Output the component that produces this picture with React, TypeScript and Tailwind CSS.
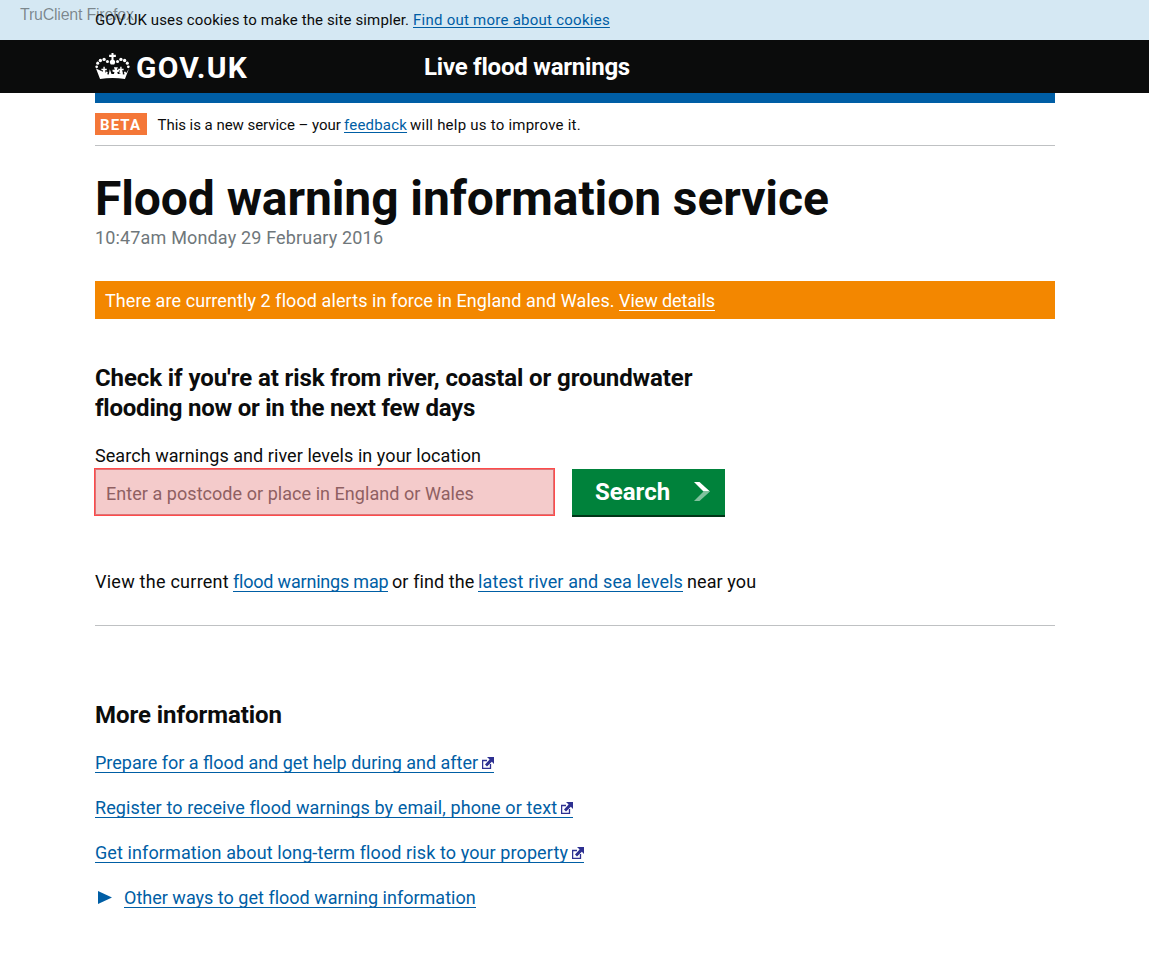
import type { ReactNode } from "react";

function Crown() {
  const dots = [
    [5, 41, 4],
    [8, 30, 4.5],
    [16, 22, 5],
    [27, 19, 5],
    [37, 25, 4.5],
  ];
  return (
    <svg className="h-[27px] w-[35px]" viewBox="0 0 104 80" fill="#fff" aria-hidden="true">
      {dots.map(([x, y, r]) => (
        <g key={x}>
          <circle cx={x} cy={y} r={r} />
          <circle cx={104 - x} cy={y} r={r} />
        </g>
      ))}
      <path d="M49 0h6v5h7v7h-7v8c6 2 7 9 2 14h-10c-5-5-4-12 2-14v-8h-7v-7h7z" />
      <path d="M3 46l12 31q37-6 74 0l12-31-8 13-4-5-3 4 2 5-5 1-3-16-5 14h-7l-2-5 6-2v-5h-7l3-8h-12l3 8h-7v5l6 2-2 5h-7l-5-14-3 16-5-1 2-5-3-4-4 5z" />
      <path d="M19 47h6v-6h4v6h6v4h-5l2 10h-10l2-10h-5zM69 47h6v-6h4v6h6v4h-5l2 10h-10l2-10h-5z" />
    </svg>
  );
}

function ExternalIcon() {
  return (
    <svg className="mt-[3px] ml-[4px] h-[12px] w-[12px] shrink-0" viewBox="0 0 12 12" aria-hidden="true">
      <path d="M5 3.5H.6v7.9h7.9V7" fill="none" stroke="#2e3191" strokeWidth="1.3" />
      <path d="M5 0h7v7L9.8 4.8 5 9.4 3 7.4l4.6-4.8z" fill="#2e3191" />
    </svg>
  );
}

function SmallLink({ className, children }: { className: string; children: ReactNode }) {
  return (
    <a
      href="#"
      className={`text-[#005ea5] underline decoration-1 underline-offset-[2px] [text-decoration-skip-ink:none] ${className}`}
    >
      {children}
    </a>
  );
}

function BodyLink({ className, children }: { className: string; children: ReactNode }) {
  return (
    <a
      href="#"
      className={`flex h-[19px] items-start border-b border-[#005ea5] leading-[18px] whitespace-nowrap text-[#005ea5] ${className}`}
    >
      {children}
    </a>
  );
}

export default function App() {
  return (
    <div className="h-[958px] w-[1166px] overflow-hidden bg-white font-['Roboto',sans-serif] text-[#0b0c0c]">
      <div className="w-[1149px]">
        <div className="relative flex h-10 bg-[#d5e8f3] pl-[95px] text-[15px] leading-10 whitespace-nowrap">
          <span className="w-[318px] tracking-[0.11px]">GOV.UK uses cookies to make the site simpler.</span>
          <SmallLink className="tracking-[0.25px]">Find out more about cookies</SmallLink>
          <span className="absolute top-[5px] left-[20px] font-['Liberation_Sans',sans-serif] text-[16px] leading-[20px] tracking-[-0.23px] text-[#0b0c0c]/45">
            TruClient Firefox
          </span>
        </div>

        <header className="flex h-[53px] bg-[#0b0c0c] pl-[95px] font-bold text-white">
          <a href="#" className="flex w-[329px] items-start">
            <span className="pt-[13px]">
              <Crown />
            </span>
            <span className="ml-[6px] pt-px text-[30px] leading-[53px] tracking-[1.2px]">GOV.UK</span>
          </a>
          <a href="#" className="pt-px text-[24px] leading-[53px] tracking-[-0.23px]">
            Live flood warnings
          </a>
        </header>
      </div>

      <main className="ml-[95px] w-[960px]">
        <div className="h-[10px] bg-[#005ea5]" />

        <div className="flex h-[43px] items-start border-b border-[#bfc1c3] pt-[10px] text-[15px] leading-[24px] whitespace-nowrap">
          <strong className="mr-[10.5px] h-[22px] w-[52px] bg-[#f47738] pl-[5px] text-[15px] leading-[24px] tracking-[1.1px] text-white">
            BETA
          </strong>
          <span className="w-[186.5px] tracking-[-0.04px]">This is a new service – your</span>
          <SmallLink className="mr-[3px] tracking-[0.2px]">feedback</SmallLink>
          <span className="tracking-[0.23px]">will help us to improve it.</span>
        </div>

        <h1 className="pt-[28px] text-[48px] leading-[50px] font-bold tracking-[-0.09px] whitespace-nowrap">
          Flood warning information service
        </h1>
        <p className="pt-[4px] text-[18px] leading-[20px] tracking-[0.16px] text-[#6f777b]">
          10:47am Monday 29 February 2016
        </p>

        <div className="mt-[33px] flex h-[38px] bg-[#f38700] pl-[10px] text-[18px] leading-[40px] whitespace-nowrap text-white">
          <span className="w-[514px] tracking-[0.08px]">
            There are currently 2 flood alerts in force in England and Wales.
          </span>
          <a href="#" className="tracking-[-0.07px] underline decoration-1 underline-offset-[3px] [text-decoration-skip-ink:none]">
            View details
          </a>
        </div>

        <h2 className="mt-[44px] text-[24px] leading-[30px] font-bold whitespace-nowrap">
          <span className="block tracking-[-0.1px]">Check if you're at risk from river, coastal or groundwater</span>
          <span className="block tracking-[-0.23px]">flooding now or in the next few days</span>
        </h2>

        <form>
          <label htmlFor="place" className="mt-[23px] block text-[18px] leading-[20px] tracking-[0.06px]">
            Search warnings and river levels in your location
          </label>
          <div className="mt-[2px] flex items-start">
            <div className="-ml-px h-[48px] w-[461px] border border-[#ff4a4a]">
              <input
                id="place"
                type="text"
                placeholder="Enter a postcode or place in England or Wales"
                className="block h-[46px] w-[459px] border border-[#dc7577] bg-[#f4cbcb] pt-[3px] pl-[10px] text-[18px] tracking-[0.05px] outline-none placeholder:text-[#8f6062]"
              />
            </div>
            <button
              type="button"
              className="mt-px ml-[17px] flex h-[48px] w-[153px] border-b-2 border-[#003618] bg-[#00823b] pl-[23px] text-[24px] leading-[46px] font-bold text-white"
            >
              <span>Search</span>
              <svg className="mt-[13px] ml-[24px] h-[19px] w-[16px]" viewBox="0 0 16 19" aria-hidden="true">
                <path d="M0 0h5.5L16 9.5H9.5z" fill="#fff" />
                <path d="M9.5 9.5H16L5.5 19H0z" fill="#80c19d" />
              </svg>
            </button>
          </div>
        </form>

        <div className="flex h-[109px] items-start border-b border-[#bfc1c3] pt-[56px] text-[18px] leading-[18px] whitespace-nowrap">
          <span className="w-[138px] tracking-[0.25px]">View the current</span>
          <BodyLink className="w-[155px] tracking-[-0.2px]">flood warnings map</BodyLink>
          <span className="w-[90px] pl-[4px] tracking-[0.1px]">or find the</span>
          <BodyLink className="w-[205px] tracking-[0.13px]">latest river and sea levels</BodyLink>
          <span className="pl-[4px] tracking-[0.1px]">near you</span>
        </div>

        <h2 className="mt-[74px] text-[24px] leading-[30px] font-bold tracking-[-0.06px]">More information</h2>

        <div className="mt-[24px] flex flex-col items-start gap-[26px] text-[18px]">
          <BodyLink className="">
            Prepare for a flood and get help during and after
            <ExternalIcon />
          </BodyLink>
          <BodyLink className="tracking-[0.11px]">
            Register to receive flood warnings by email, phone or text
            <ExternalIcon />
          </BodyLink>
          <BodyLink className="tracking-[0.1px]">
            Get information about long-term flood risk to your property
            <ExternalIcon />
          </BodyLink>
          <div className="flex items-start">
            <svg className="mt-[2px] mr-[12px] ml-[3px] h-[13px] w-[14px]" viewBox="0 0 14 13" aria-hidden="true">
              <path d="M0 0l14 6.5-14 6.5z" fill="#005ea5" />
            </svg>
            <BodyLink className="tracking-[0.01px]">Other ways to get flood warning information</BodyLink>
          </div>
        </div>
      </main>
    </div>
  );
}
